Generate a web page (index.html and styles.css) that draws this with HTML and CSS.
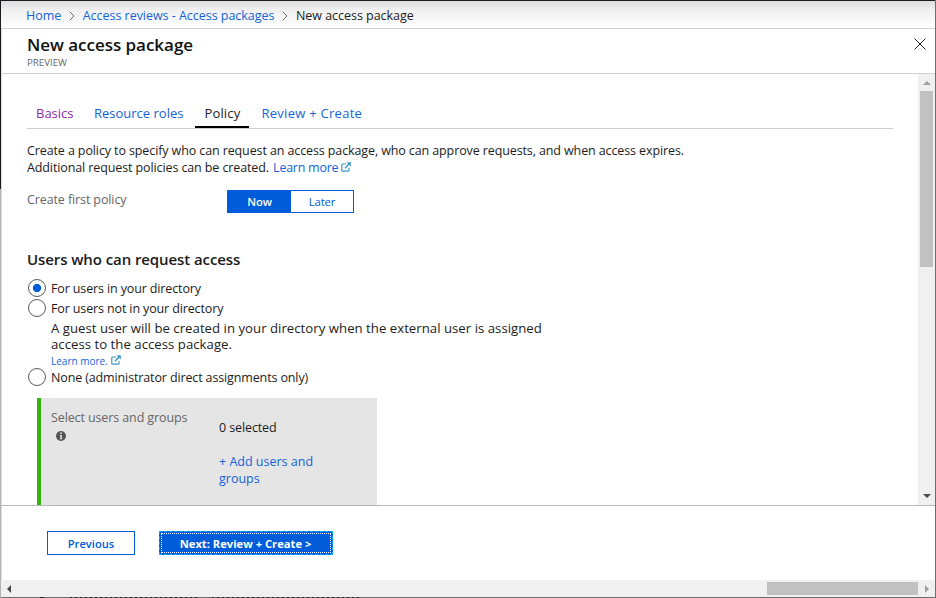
FILE: index.html
```html
<!DOCTYPE html>
<html lang="en">
<head>
<meta charset="utf-8">
<title>New access package</title>
<link rel="stylesheet" href="styles.css">
</head>
<body>
<svg class="sprite" aria-hidden="true">
  <symbol id="external" viewBox="0 0 10 10">
    <path d="M5 2H1.6Q.8 2 .8 2.800V8.400Q.8 9.200 1.600 9.200H7.200Q8 9.200 8 8.400V6" fill="none" stroke="currentColor" stroke-width="1.200"/>
    <path d="M4 6.200L8.500 1.500" fill="none" stroke="currentColor" stroke-width="1.500"/>
    <path d="M5.500.300H9.800V4.600Z" fill="currentColor"/>
  </symbol>
</svg>
<div class="window">
  <nav class="crumbs">
    <a>Home</a>
    <svg class="chevron" viewBox="0 0 6 10"><path d="M.8.8L5 5L.8 9.200"/></svg>
    <a>Access reviews - Access packages</a>
    <svg class="chevron" viewBox="0 0 6 10"><path d="M.8.8L5 5L.8 9.200"/></svg>
    <span>New access package</span>
  </nav>
  <header class="blade-head">
    <div>
      <h1>New access package</h1>
      <div class="preview">PREVIEW</div>
    </div>
    <svg class="close" viewBox="0 0 12 12"><path d="M.4.4L11.600 11.600M11.600.4L.4 11.600"/></svg>
  </header>
  <div class="scroller">
    <main class="content">
      <div class="tabs">
        <a class="tab visited">Basics</a>
        <a class="tab">Resource roles</a>
        <a class="tab active">Policy</a>
        <a class="tab wide">Review + Create</a>
      </div>
      <p class="intro">Create a policy to specify who can request an access package, who can approve requests, and when access expires.<br>Additional request policies can be created. <a class="learn">Learn more</a><svg class="ext"><use href="#external"/></svg></p>
      <div class="field">
        <span class="label">Create first policy</span>
        <div class="toggle"><span class="on">Now</span><span>Later</span></div>
      </div>
      <h2>Users who can request access</h2>
      <div class="radio"><i class="dot checked"></i><span>For users in your directory</span></div>
      <div class="radio"><i class="dot"></i><span>For users not in your directory</span></div>
      <div class="hint">A guest user will be created in your directory when the external user is assigned<br>access to the access package.</div>
      <div class="hint-link"><a>Learn more.</a><svg class="ext"><use href="#external"/></svg></div>
      <div class="radio"><i class="dot"></i><span>None (administrator direct assignments only)</span></div>
      <section class="panel">
        <div class="panel-label">Select users and groups
          <svg class="info" viewBox="0 0 10 10"><circle cx="5" cy="5" r="5"/><path d="M4.200 1.600H5.800V3.100H4.200ZM3.800 4H5.800V7.400H6.400V8.300H3.700V7.400H4.300V4.900H3.800Z"/></svg>
        </div>
        <div class="panel-value">
          <div>0 selected</div>
          <a>+ Add users and<br>groups</a>
        </div>
      </section>
    </main>
    <div class="vbar">
      <svg class="arrow-v" viewBox="0 0 8 4"><path d="M0 4L4 0L8 4Z" fill="#a0a0a0"/></svg>
      <div class="vthumb"></div>
      <svg class="arrow-v end" viewBox="0 0 8 4"><path d="M0 0H8L4 4Z" fill="#484848"/></svg>
    </div>
  </div>
  <footer class="actions">
    <button>Previous</button>
    <button class="primary"><span>Next: Review + Create &gt;</span></button>
  </footer>
  <div class="hbar">
    <svg class="arrow-h" viewBox="0 0 4 8"><path d="M4 0V8L0 4Z" fill="#484848"/></svg>
    <div class="hthumb"></div>
    <svg class="arrow-h right" viewBox="0 0 4 8"><path d="M0 0V8L4 4Z" fill="#a0a0a0"/></svg>
  </div>
</div>
</body>
</html>
```
FILE: styles.css
```css
* { box-sizing: border-box; }
body {
  margin: 0;
  overflow: hidden;
  background: #fff;
  color: #1c1c1c;
  font: 12.5px/17px "Open Sans", "Noto Sans", sans-serif;
}
a { color: #1464d8; }
h1, h2, p { margin: 0; }
.sprite { display: none; }

/* The outer edges are painted by the background: the left edge changes
   tone part way down, the bottom one has darker specks. */
.window {
  display: flex;
  flex-direction: column;
  width: 936px;
  height: 598px;
  padding: 1px 0 1px 1px;
  border-right: 1px solid #6d6d6d;
  background:
    linear-gradient(#1f1a1d, #1f1a1d) 0 0 / 100% 1px no-repeat,
    linear-gradient(#1f1a1d 189px, #b4b4b4 189px) 0 0 / 1px 100% no-repeat,
    linear-gradient(90deg, #222, #222) 40px 100% / 4px 1px no-repeat,
    repeating-linear-gradient(90deg, #2a2522 0 2px, #6d6d6d 2px 5px) 70px 100% / 130px 1px no-repeat,
    repeating-linear-gradient(90deg, #2a2522 0 2px, #6d6d6d 2px 5px) 212px 100% / 150px 1px no-repeat,
    linear-gradient(#6d6d6d, #6d6d6d) 0 100% / 100% 1px no-repeat,
    #fff;
}

.crumbs {
  display: flex;
  height: 28px;
  padding: 6px 0 0 25px;
  border-bottom: 1px solid #d2d2d2;
  background: linear-gradient(#dedcde, #f0f0f0 9px, #fcfcfc 24px, #fff);
  letter-spacing: -0.03px;
}
.chevron {
  width: 6px;
  height: 10px;
  margin: 4px 8px 0 7.500px;
  fill: none;
  stroke: #666;
}

.blade-head {
  display: flex;
  justify-content: space-between;
  height: 45px;
  padding: 4px 9px 0 25px;
  border-bottom: 1px solid #d2d2d2;
  border-left: 1px solid #ddd;
}
h1 { font-size: 17px; line-height: 23px; font-weight: 600; color: #111; letter-spacing: -0.03px; }
.preview { font-size: 9.7px; line-height: 13px; color: #666; }
.close { width: 12px; height: 12px; margin-top: 5px; fill: none; stroke: #222; }

.scroller {
  display: flex;
  height: 431px;
  overflow: hidden;
  border-left: 1px solid #ddd;
}
.content {
  flex: 1;
  min-width: 0;
  padding: 30px 25px 0;
  letter-spacing: -0.11px;
}
.tabs {
  display: flex;
  gap: 3px;
  border-bottom: 1px solid #d0d0d0;
  font-size: 13px;
  line-height: 18px;
  letter-spacing: 0;
}
.tab { padding: 0 9px 4px; border-bottom: 2px solid transparent; }
.tab.visited { width: 55px; color: #8b2aa5; }
.tab.active { width: 54px; color: #222; border-color: #000; letter-spacing: 0.15px; }
.tab.wide { letter-spacing: 0.27px; }
.intro { margin-top: 13px; }
.learn { margin-left: 1px; letter-spacing: -0.25px; }
.ext { width: 10px; height: 10px; margin-left: 3px; color: #3d9ac4; }
.field { display: flex; margin-top: 14px; }
.label { width: 200px; padding-top: 1px; color: #666; }
.toggle {
  display: flex;
  width: 127px;
  height: 23px;
  border: 1px solid #015cda;
  color: #015cda;
  font-size: 11.3px;
  line-height: 22px;
  text-align: center;
}
.toggle span { flex: 1; }
.toggle .on { flex: 0 0 63px; background: #015cda; color: #fff; font-weight: 600; }
h2 {
  margin-top: 36px;
  font-size: 15px;
  line-height: 20px;
  font-weight: 600;
  letter-spacing: -0.09px;
}
h2 + .radio { margin-top: 9px; }
.radio { display: flex; height: 20px; letter-spacing: -0.13px; }
.radio span { padding: 2px 0 0 5px; }
.dot {
  width: 18px;
  height: 18px;
  margin: 1px 0 0 1px;
  border: 1px solid #5a5a5a;
  border-radius: 50%;
}
.dot.checked { background: radial-gradient(circle, #015cda 3.8px, transparent 4.4px); }
.hint { padding: 2px 0 0 24px; font-size: 13.2px; line-height: 16px; letter-spacing: 0.02px; }
.hint-link {
  height: 13px;
  margin: 2px 0 0 24px;
  font-size: 10px;
  line-height: 14px;
  letter-spacing: 0;
}
.panel {
  display: flex;
  width: 340px;
  height: 130px;
  margin: 11px 0 0 10px;
  border-left: 4px solid #32b30a;
  background: #e5e5e5;
}
.panel-label { width: 178px; padding: 11px 0 0 10px; color: #666; }
.info { display: block; width: 10px; height: 10px; margin: 5px 0 0 5px; }
.info circle { fill: #555; }
.info path { fill: #e5e5e5; }
.panel-value { padding-top: 21px; }
.panel-value a { display: block; margin-top: 17px; letter-spacing: 0; }

.vbar {
  display: flex;
  flex-direction: column;
  align-items: center;
  width: 17px;
  background: #f0f0f0;
}
.vthumb { width: 13px; height: 176px; background: #c1c1c1; }
.arrow-v { width: 8px; height: 4px; margin: 7px 0 6px; }
.arrow-v.end { margin-top: auto; margin-bottom: 7px; }

.actions {
  display: flex;
  gap: 24px;
  height: 75px;
  padding: 25px 0 0 45px;
  border-top: 1px solid #b8b8b8;
  border-left: 1px solid #ddd;
}
button {
  width: 88px;
  height: 24px;
  padding: 4px 0;
  border: 1px solid #015cda;
  background: #fff;
  color: #015cda;
  font: 600 11.2px/15px "Open Sans", "Noto Sans", sans-serif;
}
.primary {
  width: 174px;
  padding: 1px;
  border: 1px dashed #00b4ff;
  background: #015cda;
  color: #fff;
  font-weight: 700;
}
.primary span {
  display: block;
  height: 20px;
  padding: 2px 1px 0 0;
  border: 1px dotted #fff;
}
.hbar {
  display: flex;
  align-items: center;
  height: 17px;
  background: #f0f0f0;
}
.hthumb { width: 151px; height: 13px; margin-left: auto; background: #c1c1c1; }
.arrow-h { width: 4px; height: 8px; margin-left: 6px; }
.arrow-h.right { margin: 0 6px 0 7px; }
```
